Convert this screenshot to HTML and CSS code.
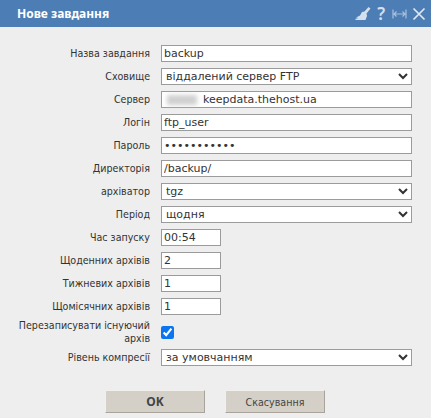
FILE: index.html
```html
<!DOCTYPE html>
<html lang="uk">
<head>
    <meta charset="UTF-8">
    <title>Нове завдання</title>
    <link rel="stylesheet" href="styles.css">
</head>
<body>
    <div class="header">
        <span class="header-title">Нове завдання</span>
        <div class="header-icons">
            <svg width="16" height="14" viewBox="0 0 16 14"><path d="M13.500 0L15.500 1.500 11.500 6.500 12 9 10.500 13 1 13 0 12 3.500 11 1 10.500 5 8.500 7 5 9.500 4.500z" fill="#d5e0ee"/></svg>
            <span class="help-icon">?</span>
            <svg width="15" height="12" viewBox="0 0 15 12"><path d="M1 1.500v9M14 1.500v9M2 6h11M4.500 3.500L2 6l2.500 2.500M10.500 3.500L13 6l-2.500 2.500" fill="none" stroke="#a9c0dc" stroke-width="1.200"/></svg>
            <svg width="14" height="14" viewBox="0 0 14 14"><path d="M1.500 1.500l11 11M12.500 1.500l-11 11" fill="none" stroke="#dfe8f2" stroke-width="1.700"/></svg>
        </div>
    </div>
    <form class="form">
        <label class="label">Назва завдання</label>
        <input class="field" type="text" value="backup">

        <label class="label">Сховище</label>
        <select class="field"><option>віддалений сервер FTP</option></select>

        <label class="label">Сервер</label>
        <div class="server-wrap">
            <input class="field server-input" type="text" value="keepdata.thehost.ua">
            <span class="blurred"></span>
        </div>

        <label class="label">Логін</label>
        <input class="field" type="text" value="ftp_user">

        <label class="label">Пароль</label>
        <input class="field" type="password" value="12345678901">

        <label class="label">Директорія</label>
        <input class="field" type="text" value="/backup/">

        <label class="label">архіватор</label>
        <select class="field"><option>tgz</option></select>

        <label class="label">Період</label>
        <select class="field"><option>щодня</option></select>

        <label class="label">Час запуску</label>
        <input class="field short" type="text" value="00:54">

        <label class="label">Щоденних архівів</label>
        <input class="field short" type="text" value="2">

        <label class="label">Тижневих архівів</label>
        <input class="field short" type="text" value="1">

        <label class="label">Щомісячних архівів</label>
        <input class="field short" type="text" value="1">

        <label class="label label-wrap">Перезаписувати існуючий архів</label>
        <input class="check" type="checkbox" checked>

        <label class="label">Рівень компресії</label>
        <select class="field"><option>за умовчанням</option></select>
    </form>
    <div class="buttons">
        <button class="btn btn-ok" type="button">OK</button>
        <button class="btn" type="button">Скасування</button>
    </div>
</body>
</html>
```

FILE: styles.css
```css
html, body {
    height: 100%;
}
body {
    margin: 0;
    background-color: #eeeeee;
    font-family: "DejaVu Sans", sans-serif;
    font-stretch: condensed;
    font-size: 10.6px;
    color: #333;
    overflow: hidden;
}
.header {
    height: 27px;
    background-color: #4c7db5;
    display: flex;
    align-items: center;
    justify-content: space-between;
    padding: 0 5px 0 17px;
}
.header-title {
    color: #fff;
    font-family: "Noto Sans", sans-serif;
    font-stretch: normal;
    font-weight: bold;
    font-size: 12px;
}
.header-icons {
    display: flex;
    align-items: center;
    gap: 5px;
}
.help-icon {
    color: #d5e0ee;
    font-family: "Noto Sans", sans-serif;
    font-weight: 600;
    font-size: 17px;
    line-height: 14px;
    margin: 0 2px 0 1px;
}
.form {
    display: grid;
    grid-template-columns: 150px 251px;
    column-gap: 11px;
    row-gap: 6px;
    align-items: center;
    padding-top: 18px;
}
.label {
    text-align: right;
    line-height: 13px;
}
.label-wrap {
    margin: -2px 0;
}
.field {
    box-sizing: border-box;
    width: 100%;
    height: 17px;
    margin: 0;
    padding: 0 2px;
    border: 1px solid #9b9b9b;
    border-radius: 0;
    background-color: #fff;
    font-family: "DejaVu Sans", sans-serif;
    font-stretch: normal;
    font-size: 11px;
    color: #333;
    outline: none;
}
select.field {
    appearance: auto;
    padding: 0;
}
.short {
    width: 60px;
}
.server-wrap {
    position: relative;
}
.server-input {
    padding-left: 41px;
}
.blurred {
    position: absolute;
    left: 6px;
    top: 4px;
    width: 30px;
    height: 10px;
    background-color: #d0d0d0;
    filter: blur(2px);
}
.check {
    width: 13px;
    height: 13px;
    margin: 0;
    accent-color: #0a75f0;
}
.buttons {
    display: flex;
    justify-content: center;
    gap: 20px;
    margin-top: 24px;
    padding-right: 1px;
}
.btn {
    width: 100px;
    height: 23px;
    padding: 0;
    border: 1px solid;
    border-color: #f2f0ec #a8a49c #a8a49c #f2f0ec;
    background-color: #d4d0c8;
    font-family: inherit;
    font-stretch: condensed;
    font-size: 10.6px;
    color: #444;
}
.btn-ok {
    font-family: "Noto Sans", sans-serif;
    font-stretch: normal;
    font-size: 12px;
    font-weight: bold;
}
```
